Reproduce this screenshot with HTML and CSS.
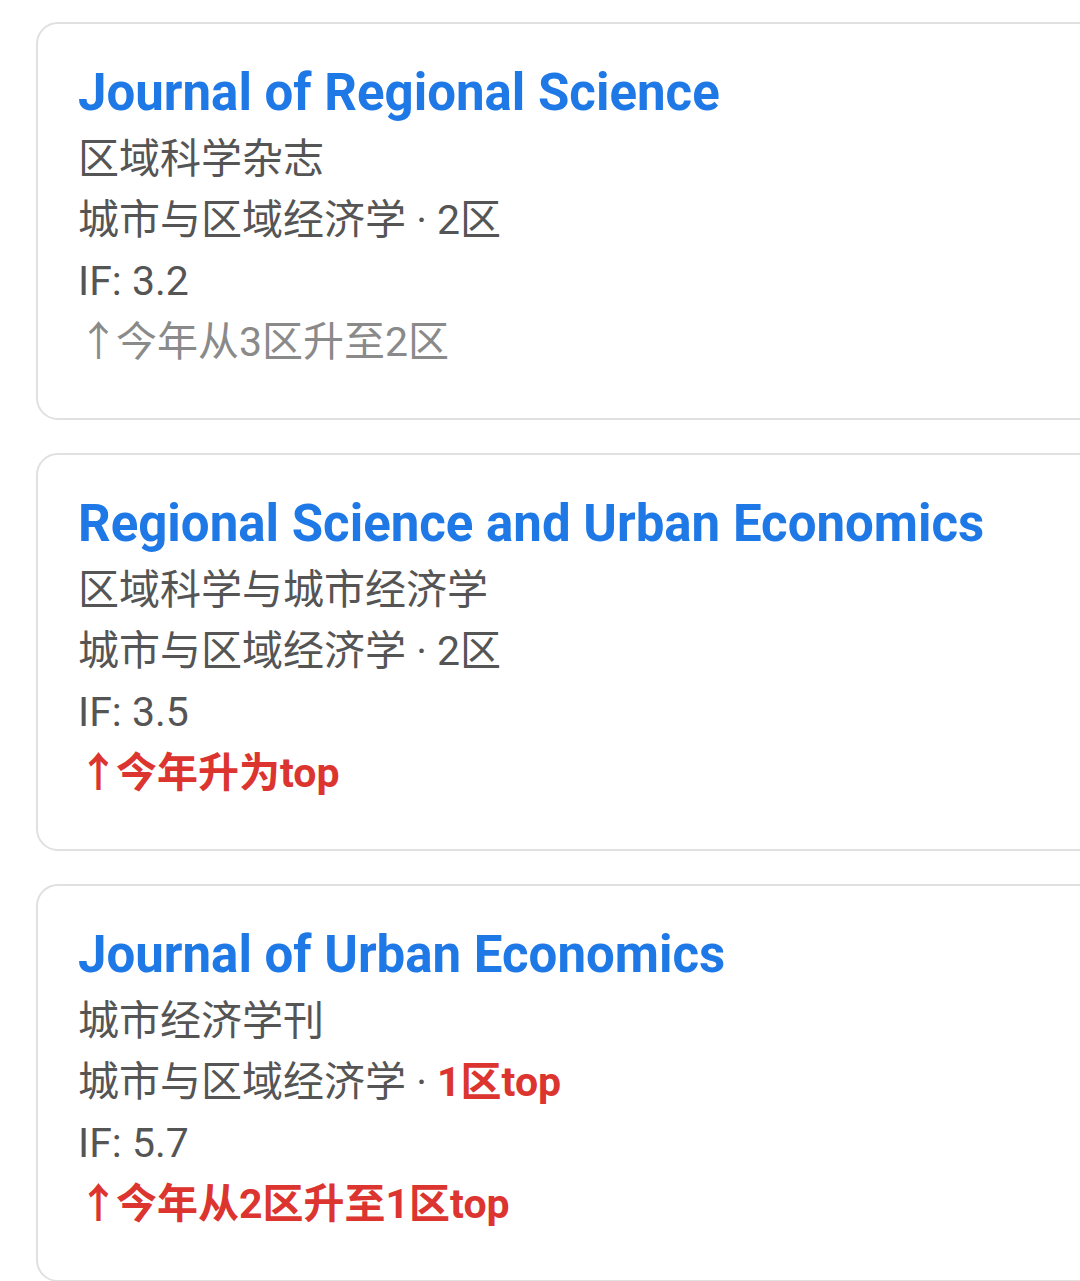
FILE: index.html
```html
<!DOCTYPE html>
<html lang="zh">
<head>
<meta charset="utf-8">
<link rel="stylesheet" href="styles.css">
</head>
<body>
<div class="list">
  <div class="card">
    <div class="title">Journal of Regional Science</div>
    <div class="line">区域科学杂志</div>
    <div class="line">城市与区域经济学 · 2区</div>
    <div class="line">IF: 3.2</div>
    <div class="line muted"><span class="arrow">↑</span>今年从3区升至2区</div>
  </div>
  <div class="card">
    <div class="title">Regional Science and Urban Economics</div>
    <div class="line">区域科学与城市经济学</div>
    <div class="line">城市与区域经济学 · 2区</div>
    <div class="line">IF: 3.5</div>
    <div class="line hot"><span class="arrow">↑</span>今年升为top</div>
  </div>
  <div class="card">
    <div class="title">Journal of Urban Economics</div>
    <div class="line">城市经济学刊</div>
    <div class="line">城市与区域经济学 · <span class="hot">1区top</span></div>
    <div class="line">IF: 5.7</div>
    <div class="line hot"><span class="arrow">↑</span>今年从2区升至1区top</div>
  </div>
</div>
</body>
</html>
```

FILE: styles.css
```css
html, body {
  margin: 0;
  padding: 0;
  overflow: hidden;
  background: #ffffff;
}
.list {
  display: flex;
  flex-direction: column;
  gap: 33px;
  padding: 22px 0 0 36px;
}
.card {
  width: 1080px;
  box-sizing: border-box;
  height: 398px;
  border: 2px solid #e0e0e0;
  border-radius: 22px;
  padding: 36px 40px 46px 40px;
  font-family: Roboto, "Noto Sans CJK SC", sans-serif;
}
.title {
  font-family: Roboto, "Noto Sans CJK SC", sans-serif;
  font-weight: 700;
  font-size: 51px;
  line-height: 66px;
  margin-bottom: 3px;
  color: #1e78e6;
  white-space: nowrap;
}
.line {
  font-size: 41px;
  line-height: 61px;
  color: #555555;
  white-space: nowrap;
}
.arrow {
  margin-right: -3px;
}
.muted {
  color: #8a8a8a;
}
.hot {
  color: #dc3530;
  font-weight: 700;
}
```
